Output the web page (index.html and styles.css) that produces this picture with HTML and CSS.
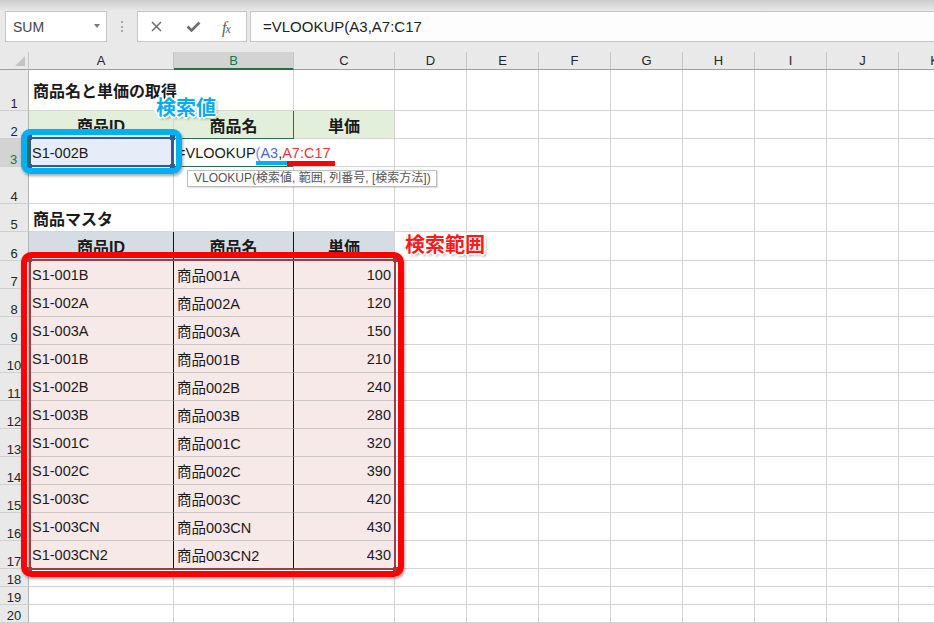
FILE: index.html
```html
<!DOCTYPE html>
<html lang="ja">
<head>
<meta charset="utf-8">
<title>VLOOKUP</title>
<link rel="stylesheet" href="styles.css">
</head>
<body>
<div class="titlebar"></div>
<div class="fbar">
  <div class="namebox"><span>SUM</span><span class="caret"></span></div>
  <div class="grip"><i></i><i></i><i></i></div>
  <div class="btns">
    <svg class="ic-x" width="11" height="11" viewBox="0 0 11 11"><path d="M1 1L10 10M10 1L1 10"/></svg>
    <svg class="ic-ok" width="15" height="11" viewBox="0 0 15 11"><path d="M1.5 5.5L5.5 9.5L13.5 1.5"/></svg>
    <span class="fx"><i>f</i><i class="sx">x</i></span>
  </div>
  <div class="formula">=VLOOKUP(A3,A7:C17</div>
</div>
<div class="gap"></div>

<div class="sheet">
  <div class="cn"><span class="tri"></span></div>
  <div class="ch">A</div>
  <div class="ch sel">B</div>
  <div class="ch">C</div>
  <div class="chr"><span>D</span><span>E</span><span>F</span><span>G</span><span>H</span><span>I</span><span>J</span><span>K</span></div>

  <div class="rh">1</div><div class="c title ov">商品名と単価の取得</div><div class="c"></div><div class="c"></div><div class="e"></div>
  <div class="rh">2</div><div class="c hg">商品ID</div><div class="c hg gr gb">商品名</div><div class="c hg">単価</div><div class="e"></div>
  <div class="rh sel">3</div><div class="c lk">S1-002B</div><div class="c fm">=VLOOKUP<span class="p">(</span><span class="r1">A3</span>,<span class="r2">A7:C17</span></div><div class="c"></div><div class="e"></div>
  <div class="rh">4</div><div class="c"></div><div class="c"></div><div class="c"></div><div class="e"></div>
  <div class="rh">5</div><div class="c title">商品マスタ</div><div class="c"></div><div class="c"></div><div class="e"></div>
  <div class="rh">6</div><div class="c hb bk">商品ID</div><div class="c hb bk">商品名</div><div class="c hb">単価</div><div class="e"></div>
  <div class="rh">7</div><div class="c pk bk">S1-001B</div><div class="c pk bk">商品001A</div><div class="c pk num">100</div><div class="e"></div>
  <div class="rh">8</div><div class="c pk bk">S1-002A</div><div class="c pk bk">商品002A</div><div class="c pk num">120</div><div class="e"></div>
  <div class="rh">9</div><div class="c pk bk">S1-003A</div><div class="c pk bk">商品003A</div><div class="c pk num">150</div><div class="e"></div>
  <div class="rh">10</div><div class="c pk bk">S1-001B</div><div class="c pk bk">商品001B</div><div class="c pk num">210</div><div class="e"></div>
  <div class="rh">11</div><div class="c pk bk">S1-002B</div><div class="c pk bk">商品002B</div><div class="c pk num">240</div><div class="e"></div>
  <div class="rh">12</div><div class="c pk bk">S1-003B</div><div class="c pk bk">商品003B</div><div class="c pk num">280</div><div class="e"></div>
  <div class="rh">13</div><div class="c pk bk">S1-001C</div><div class="c pk bk">商品001C</div><div class="c pk num">320</div><div class="e"></div>
  <div class="rh">14</div><div class="c pk bk">S1-002C</div><div class="c pk bk">商品002C</div><div class="c pk num">390</div><div class="e"></div>
  <div class="rh">15</div><div class="c pk bk">S1-003C</div><div class="c pk bk">商品003C</div><div class="c pk num">420</div><div class="e"></div>
  <div class="rh">16</div><div class="c pk bk">S1-003CN</div><div class="c pk bk">商品003CN</div><div class="c pk num">430</div><div class="e"></div>
  <div class="rh">17</div><div class="c pk bk">S1-003CN2</div><div class="c pk bk">商品003CN2</div><div class="c pk num">430</div><div class="e"></div>
  <div class="rh">18</div><div class="c"></div><div class="c"></div><div class="c"></div><div class="e"></div>
  <div class="rh">19</div><div class="c"></div><div class="c"></div><div class="c"></div><div class="e"></div>
  <div class="rh">20</div><div class="c"></div><div class="c"></div><div class="c"></div><div class="e"></div>

  <div class="ref ref-blue"><i class="hd tl"></i><i class="hd tr"></i><i class="hd bl"></i><i class="hd br"></i></div>
  <div class="ref ref-red"><i class="hd tl"></i><i class="hd tr"></i><i class="hd bl"></i><i class="hd br"></i></div>
  <div class="ul ul-cyan"></div>
  <div class="ul ul-red"></div>
  <div class="tip">VLOOKUP(検索値, 範囲, 列番号, [検索方法])</div>
  <div class="ann ann-cyan"></div>
  <div class="ann ann-red"></div>
  <div class="lbl lbl-cyan">検索値</div>
  <div class="lbl lbl-red">検索範囲</div>
</div>
</body>
</html>
```

FILE: styles.css
```css
* { box-sizing: border-box; }
html, body { margin: 0; padding: 0; }
body {
  width: 934px;
  height: 623px;
  overflow: hidden;
  background: #fff;
  font-family: "Liberation Sans", "Noto Sans CJK JP", sans-serif;
  color: #1a1a1a;
}

/* ---------- top bars ---------- */
.titlebar {
  height: 11px;
  background: linear-gradient(#cdcdcd, #e0e0e0 70%, #e9e9e9);
}
.fbar {
  display: flex;
  height: 31px;
  padding-left: 5px;
  background: #e9e9e9;
}
.namebox {
  width: 102px;
  height: 31px;
  background: #fff;
  border: 1px solid #c6c6c6;
  display: flex;
  align-items: center;
  justify-content: space-between;
  padding: 1px 6px 0 7px;
  font-size: 14px;
  color: #444;
}
.caret {
  width: 0;
  height: 0;
  border-left: 3.5px solid transparent;
  border-right: 3.5px solid transparent;
  border-top: 4px solid #777;
  margin-top: -3px;
}
.grip {
  width: 30px;
  display: flex;
  flex-direction: column;
  align-items: center;
  justify-content: center;
  gap: 2.5px;
}
.grip i { width: 2px; height: 2px; background: #a9a9a9; }
.btns {
  width: 110px;
  height: 31px;
  background: #fff;
  border: 1px solid #c6c6c6;
  display: flex;
  align-items: center;
  padding-left: 13px;
}
.ic-x path { stroke: #6e6e6e; stroke-width: 1.5; fill: none; }
.ic-ok { margin-left: 24px; }
.ic-ok path { stroke: #6e6e6e; stroke-width: 2.6; fill: none; }
.fx {
  margin-left: 21px;
  margin-top: 2px;
  font-family: "Liberation Serif", serif;
  font-size: 16px;
  color: #5e5e5e;
}
.fx .sx { font-size: 12px; margin-left: -1px; }
.formula {
  flex: 1;
  margin-left: 3px;
  margin-right: -2px;
  height: 31px;
  background: #fdfdfd;
  border: 1px solid #c6c6c6;
  padding-left: 12px;
  font-size: 15px;
  line-height: 29px;
  color: #222;
}
.gap { height: 10px; background: #e9e9e9; }

/* ---------- sheet grid ---------- */
.sheet {
  position: relative;
  display: grid;
  grid-template-columns: 29px 145px 120px 101px 539px;
  grid-template-rows: 18px 41px 28px 28px 37px 28px 29px repeat(11, 28px) 18px 18px 18px;
}
.cn {
  background: #e9e9e9;
  border-right: 1px solid #c6c6c6;
  border-bottom: 1px solid #9e9e9e;
  display: flex;
  justify-content: flex-end;
  align-items: flex-end;
  padding: 0 3px 3px 0;
}
.tri {
  width: 0;
  height: 0;
  border-left: 10px solid transparent;
  border-bottom: 10px solid #c4c4c4;
}
.ch {
  background: #e9e9e9;
  border-right: 1px solid #c6c6c6;
  border-bottom: 1px solid #9e9e9e;
  display: flex;
  align-items: center;
  justify-content: center;
  font-size: 13px;
  color: #262626;
}
.ch.sel {
  background: #d3d3d3;
  color: #217346;
  border-bottom: 2px solid #217346;
}
.chr {
  display: flex;
  background: #e9e9e9;
  border-bottom: 1px solid #9e9e9e;
  overflow: hidden;
}
.chr span {
  flex: 0 0 72px;
  border-right: 1px solid #c6c6c6;
  display: flex;
  align-items: center;
  justify-content: center;
  font-size: 13px;
  color: #262626;
}
.rh {
  background: #e9e9e9;
  border-right: 1px solid #b4b4b4;
  border-bottom: 1px solid #d0d0d0;
  display: flex;
  justify-content: center;
  align-items: flex-end;
  font-size: 13px;
  line-height: 13px;
  color: #262626;
}
.rh.sel {
  background: #d3d3d3;
  color: #217346;
  border-right: 2px solid #217346;
}
.c {
  border-right: 1px solid #d4d4d4;
  border-bottom: 1px solid #d4d4d4;
  display: flex;
  align-items: center;
  padding: 0 3px;
  white-space: nowrap;
  font-size: 14.5px;
  min-width: 0;
}
.e {
  border-bottom: 1px solid #d4d4d4;
  background: repeating-linear-gradient(to right, transparent 0 71px, #d4d4d4 71px 72px);
}
.title { font-weight: 700; font-size: 16px; padding-left: 4px; }
.ov { border-right-color: transparent; }
.hg {
  background: #e2efda;
  justify-content: center;
  font-weight: 700;
  font-size: 16px;
}
.hb {
  background: #d6dce4;
  justify-content: center;
  font-weight: 700;
  font-size: 16px;
}
.gr { border-right-color: #2f6f47; }
.gb { border-bottom-color: #2f6f47; }
.bk { border-right-color: #111; }
.pk { background: #f8e9e9; border-bottom-color: #c8c8c8; }
.num { justify-content: flex-end; }
.lk { background: #e7edf8; border-right-color: #2f6f47; }
.fm { border-right-color: transparent; border-bottom-color: #2f6f47; }
.fm .p { color: #7d90c6; }
.fm .r1 { color: #4a6cc4; }
.fm .r2 { color: #e03a3e; }

/* ---------- overlays ---------- */
.ref { position: absolute; border: 2px solid; }
.ref-blue { left: 29px; top: 85px; width: 144px; height: 30px; border-color: #2e59a5; }
.ref-red { left: 29px; top: 207px; width: 367px; height: 311px; border-color: #a53a3e; }
.hd { position: absolute; width: 5px; height: 5px; }
.ref-blue .hd { background: #2e59a5; }
.ref-red .hd { background: #a53a3e; }
.hd.tl { left: -4px; top: -4px; }
.hd.tr { right: -4px; top: -4px; }
.hd.bl { left: -4px; bottom: -4px; }
.hd.br { right: -4px; bottom: -4px; }

.ul { position: absolute; }
.ul-cyan { left: 256px; top: 109px; width: 31px; height: 4px; background: #00b0f0; }
.ul-red { left: 287px; top: 109px; width: 48px; height: 5px; background: #ff0000; }

.tip {
  position: absolute;
  left: 187px;
  top: 118px;
  width: 250px;
  height: 17px;
  background: #fff;
  border: 1px solid #bdbdbd;
  box-shadow: 1px 1px 1px rgba(0, 0, 0, 0.12);
  padding-left: 6px;
  font-size: 12px;
  line-height: 15px;
  color: #555;
  white-space: nowrap;
  overflow: hidden;
}

.ann {
  position: absolute;
  border: 6px solid;
  box-shadow: 1px 2px 3px rgba(0, 0, 0, 0.35);
}
.ann-cyan { left: 21px; top: 77px; width: 161px; height: 45px; border-color: #00b0f0; border-radius: 9px; }
.ann-red { left: 21px; top: 200px; width: 383px; height: 325px; border-color: #ff0000; border-radius: 10px; }

.lbl {
  position: absolute;
  font-family: "Noto Sans CJK JP", sans-serif;
  font-weight: 700;
  font-size: 20px;
  line-height: 24px;
  white-space: nowrap;
  text-shadow:
    -2px 0 #fff, 2px 0 #fff, 0 -2px #fff, 0 2px #fff,
    -1px -1px #fff, 1px 1px #fff, -1px 1px #fff, 1px -1px #fff,
    2px 2px 3px rgba(0, 0, 0, 0.45);
}
.lbl-cyan { left: 156px; top: 43px; color: #00aeef; }
.lbl-red { left: 405px; top: 180px; color: #ff1a1a; }
```
